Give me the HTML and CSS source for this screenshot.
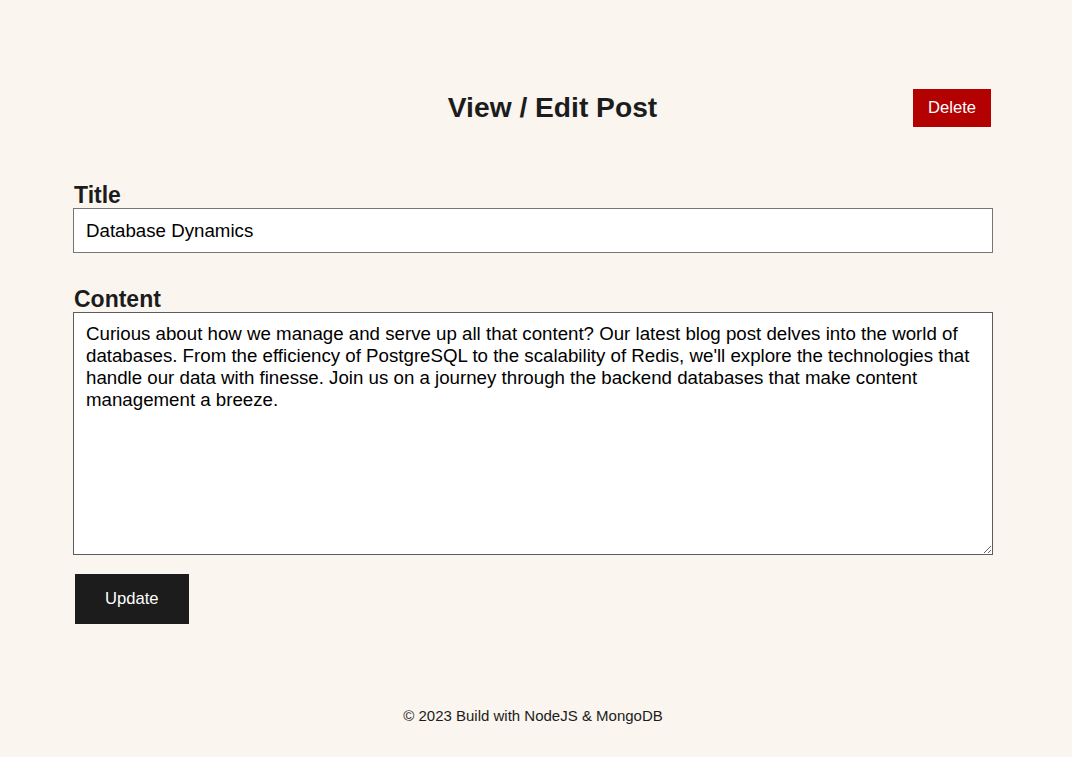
FILE: index.html
```html
<!DOCTYPE html>
<html lang="en">
<head>
<meta charset="utf-8">
<title>View / Edit Post</title>
<link rel="stylesheet" href="styles.css">
</head>
<body>
<div class="page">
  <header class="header">
    <h1 class="header__title">View / Edit Post</h1>
    <form class="delete-form" onsubmit="return false">
      <button class="btn btn--delete" type="submit">Delete</button>
    </form>
  </header>
  <form class="post-form" onsubmit="return false">
    <label class="post-form__label" for="title">Title</label>
    <input class="post-form__input" id="title" type="text" value="Database Dynamics">
    <label class="post-form__label post-form__label--content" for="body">Content</label>
    <textarea class="post-form__textarea" id="body">Curious about how we manage and serve up all that content? Our latest blog post delves into the world of databases. From the efficiency of PostgreSQL to the scalability of Redis, we'll explore the technologies that handle our data with finesse. Join us on a journey through the backend databases that make content management a breeze.</textarea>
    <button class="btn btn--update" type="submit">Update</button>
  </form>
  <footer class="footer">© 2023 Build with NodeJS &amp; MongoDB</footer>
</div>
</body>
</html>
```

FILE: styles.css
```css
* {
  box-sizing: border-box;
}

html, body {
  margin: 0;
  padding: 0;
  background: #faf5ef;
  color: #1c1c1c;
  font-family: "Liberation Sans", Arial, sans-serif;
}

.page {
  width: 920px;
  margin: 0 79px 0 73px;
  padding-top: 89px;
}

.header {
  display: flex;
  align-items: center;
}

.header__title {
  flex: 1;
  margin: 0 0 1px;
  padding-left: 121px;
  text-align: center;
  font-size: 28.2px;
  font-weight: 700;
  line-height: normal;
}

.delete-form {
  margin: 0 2px;
}

.btn {
  border: none;
  border-radius: 0;
  color: #fff;
  font-family: "Liberation Sans", Arial, sans-serif;
  font-size: 16.6px;
  cursor: pointer;
}

.btn--delete {
  display: block;
  height: 38px;
  padding: 0 15px;
  background: #b30000;
}

.post-form {
  display: flex;
  flex-direction: column;
  align-items: flex-start;
  margin-top: 55px;
}

.post-form__label {
  display: block;
  margin-left: 1px;
  font-size: 23px;
  font-weight: 700;
  line-height: 26px;
}

.post-form__label--content {
  margin-top: 33px;
}

.post-form__input,
.post-form__textarea {
  width: 100%;
  margin: 0;
  border: 1px solid #767676;
  border-radius: 0;
  background: #fff;
  color: #000;
  font-family: "Liberation Sans", Arial, sans-serif;
  font-size: 18.7px;
  padding: 11px 12px;
}

.post-form__input {
  height: 45px;
  line-height: 21px;
}

.post-form__textarea {
  height: 243px;
  border-color: #5c5c5c;
  line-height: 21.9px;
  padding-top: 10px;
  resize: vertical;
}

.btn--update {
  margin: 19px 2px 0;
  height: 50px;
  padding: 0 30px;
  background: #1c1c1c;
}

.footer {
  margin-top: 83px;
  text-align: center;
  font-size: 15px;
  line-height: 17px;
}
```
